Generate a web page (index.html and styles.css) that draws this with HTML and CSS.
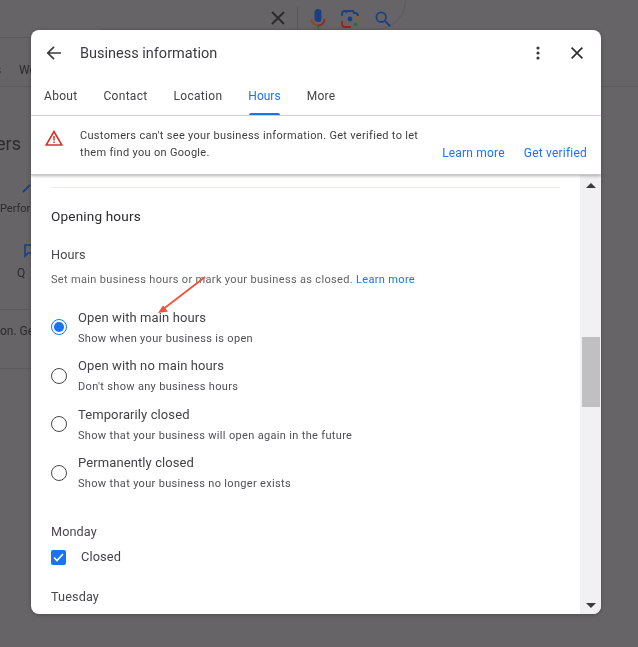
FILE: index.html
```html
<!DOCTYPE html>
<html lang="en">
<head>
<meta charset="utf-8">
<title>Business information</title>
<link rel="stylesheet" href="styles.css">
</head>
<body>
<div class="backdrop">
  <div class="search-pill"></div>
  <svg class="bg-icon bg-x" width="16" height="16" viewBox="0 0 16 16"><path d="M2 2l12 12M14 2L2 14" stroke="#2a282b" stroke-width="1.8" fill="none"/></svg>
  <div class="search-div"></div>
  <svg class="bg-icon bg-mic" width="16" height="24" viewBox="0 0 16 24"><rect x="4.5" y="1" width="7" height="13" rx="3.5" fill="#1c3f83"/><path d="M1.5 11a6.5 6.5 0 0 0 6.5 6.5" stroke="#8a4a1e" stroke-width="1.8" fill="none"/><path d="M8 17.5A6.5 6.5 0 0 0 14.500 11" stroke="#8a2a22" stroke-width="1.8" fill="none"/><path d="M8 17.500V22" stroke="#2f6b3a" stroke-width="1.8"/></svg>
  <svg class="bg-icon bg-lens" width="18" height="18" viewBox="0 0 18 18" fill="none" stroke-width="1.800"><path d="M1 6V4a3 3 0 0 1 3-3h1" stroke="#1c3f83"/><path d="M1 11v3a3 3 0 0 0 3 3h6" stroke="#8a2a22"/><path d="M5 3l1-2h6l1 2h1a3 3 0 0 1 3 3v5" stroke="#1c3f83"/><path d="M17 6v5" stroke="#8f6a16"/><circle cx="9" cy="9" r="2.400" fill="#1c3f83" stroke="none"/><circle cx="14.500" cy="14.500" r="1.800" fill="#2f6b3a" stroke="none"/></svg>
  <svg class="bg-icon bg-mag" width="16" height="16" viewBox="0 0 16 16" fill="none" stroke="#1c3f83" stroke-width="1.800"><circle cx="6.200" cy="6.200" r="4.800"/><path d="M9.800 9.800L15 15"/></svg>
  <div class="bg-line l1"></div>
  <div class="bg-line l2"></div>
  <div class="bg-line l3"></div>
  <div class="bg-line l4"></div>
  <div class="bg-line l5"></div>
  <span class="bg-text t1">s</span>
  <span class="bg-text t2">We</span>
  <span class="bg-text t3">ers</span>
  <span class="bg-text t4">Perfor</span>
  <span class="bg-text t5">Q</span>
  <span class="bg-text t6">on. Ge</span>
  <svg class="bg-icon bg-wand" width="10" height="10" viewBox="0 0 10 10"><path d="M1 9l7-7" stroke="#1c3f83" stroke-width="1.800"/></svg>
  <svg class="bg-icon bg-chat" width="10" height="14" viewBox="0 0 10 14" fill="none"><path d="M1 1h9v8H4l-3 3z" stroke="#1c3f83" stroke-width="1.600"/></svg>
</div>

<main class="dialog">
  <header class="topbar">
    <svg class="back" width="16" height="16" viewBox="0 0 16 16" fill="none" stroke="#3c3a3e" stroke-width="1.700"><path d="M15 8H2M8 1.800L1.800 8 8 14.200"/></svg>
    <h1 class="title">Business information</h1>
    <svg class="more" width="4" height="14" viewBox="0 0 4 14" fill="#3c3a3e"><circle cx="2" cy="2" r="1.600"/><circle cx="2" cy="7" r="1.600"/><circle cx="2" cy="12" r="1.600"/></svg>
    <svg class="close" width="12" height="12" viewBox="0 0 12 12" fill="none" stroke="#2f2d31" stroke-width="1.700"><path d="M.6.6l10.800 10.800M11.400.6L.6 11.400"/></svg>
  </header>
  <nav class="tabs">
    <span class="tab">About</span>
    <span class="tab">Contact</span>
    <span class="tab">Location</span>
    <span class="tab active">Hours</span>
    <span class="tab">More</span>
  </nav>
  <section class="notice">
    <svg class="warn" width="18" height="16" viewBox="0 0 18 16" fill="none"><path d="M9 1.500L1.200 15h15.600z" stroke="#d93025" stroke-width="1.600"/><path d="M9 6v4.500M9 11.500v1.600" stroke="#d93025" stroke-width="1.500"/></svg>
    <p class="notice-text">Customers can't see your business information. Get verified to let them find you on Google.</p>
    <div class="notice-links">
      <a class="link">Learn more</a>
      <a class="link">Get verified</a>
    </div>
  </section>
  <div class="body">
    <div class="content">
      <div class="rule"></div>
      <h2 class="section-title">Opening hours</h2>
      <h3 class="label">Hours</h3>
      <p class="help">Set main business hours or mark your business as closed. <a class="link inline">Learn more</a></p>
      <div class="options">
        <div class="option">
          <span class="radio on"></span>
          <div><div class="opt-title">Open with main hours</div><div class="opt-sub">Show when your business is open</div></div>
        </div>
        <div class="option">
          <span class="radio"></span>
          <div><div class="opt-title">Open with no main hours</div><div class="opt-sub">Don't show any business hours</div></div>
        </div>
        <div class="option">
          <span class="radio"></span>
          <div><div class="opt-title">Temporarily closed</div><div class="opt-sub">Show that your business will open again in the future</div></div>
        </div>
        <div class="option">
          <span class="radio"></span>
          <div><div class="opt-title">Permanently closed</div><div class="opt-sub">Show that your business no longer exists</div></div>
        </div>
      </div>
      <h3 class="label day">Monday</h3>
      <div class="check-row">
        <span class="checkbox"><svg width="11" height="9" viewBox="0 0 11 9" fill="none" stroke="#fff" stroke-width="1.600"><path d="M1 4.500l3 3L10 1"/></svg></span>
        <span class="check-label">Closed</span>
      </div>
      <h3 class="label day2">Tuesday</h3>
    </div>
    <div class="scrollbar">
      <span class="arrow up"></span>
      <span class="thumb"></span>
      <span class="arrow down"></span>
    </div>
    <svg class="annot" width="52" height="40" viewBox="0 0 52 40" fill="none"><path d="M48 2L5 35" stroke="#f4513b" stroke-width="1.800"/><path d="M1 38l10-1.500-5-6z" fill="#f4513b"/></svg>
  </div>
</main>
</body>
</html>
```
FILE: styles.css
```css
* { box-sizing: border-box; }
html, body { height: 100%; }
body {
  margin: 0;
  width: 638px;
  height: 647px;
  overflow: hidden;
  position: relative;
  background: #666467;
  font-family: Roboto, "Liberation Sans", sans-serif;
  color: #3c3a3e;
  padding: 30px 37px 33px 31px;
}
h1, h2, h3, p { margin: 0; font-weight: 400; }

.backdrop { position: absolute; inset: 0; filter: blur(.4px); }
.search-pill { position: absolute; left: 100px; top: -30px; width: 306px; height: 60px; border: 1px solid #5e5c5f; border-left: 0; border-radius: 0 30px 30px 0; }
.search-div { position: absolute; left: 297px; top: 7px; width: 1px; height: 23px; background: #5a585b; }
.bg-icon { position: absolute; }
.bg-x { left: 270px; top: 10px; }
.bg-mic { left: 310px; top: 8px; }
.bg-lens { left: 341px; top: 10px; }
.bg-mag { left: 375px; top: 11px; }
.bg-wand { left: 22px; top: 183px; }
.bg-chat { left: 24px; top: 244px; }
.bg-line { position: absolute; height: 1px; background: #5c5a5d; }
.l1 { left: 0; top: 37px; width: 31px; }
.l2 { left: 0; top: 86px; width: 31px; }
.l3 { left: 601px; top: 86px; width: 37px; }
.l4 { left: 0; top: 309px; width: 31px; }
.l5 { left: 0; top: 368px; width: 31px; }
.bg-text { position: absolute; color: #2c2a2d; font-size: 12px; line-height: 14px; white-space: nowrap; }
.t1 { left: -5px; top: 63px; }
.t2 { left: 19px; top: 63px; }
.t3 { left: -4px; top: 134px; font-size: 18px; line-height: 20px; }
.t4 { left: 0; top: 202px; font-size: 11px; }
.t5 { left: 17px; top: 266px; }
.t6 { left: 0; top: 324px; }

.dialog {
  position: relative;
  width: 570px;
  height: 584px;
  background: #fff;
  border-radius: 8px;
  overflow: hidden;
  display: flex;
  flex-direction: column;
  box-shadow: 0 1px 4px rgba(0,0,0,.25);
  filter: blur(.3px);
}

.topbar { display: flex; align-items: center; height: 46px; flex: none; padding: 0 18px 0 15px; }
.back { flex: none; }
.title { margin-left: 18px; font-size: 14.500px; line-height: 20px; color: #3c3a3e; flex: 1; padding-top: 2px; }
.more { margin-right: 31px; }

.tabs { display: flex; gap: 26px; padding: 0 13px; height: 40px; flex: none; border-bottom: 1px solid #dcdbdd; }
.tab { font-size: 12px; line-height: 40px; height: 39px; color: #444246; letter-spacing: .3px; position: relative; font-weight: 400; }
.tab.active { color: #1a73f0; letter-spacing: 0; }
.tab.active::after { content: ""; position: absolute; left: 1px; right: 1px; bottom: 0; height: 2px; background: #1a73f0; border-radius: 2px 2px 0 0; }

.notice { position: relative; flex: none; height: 59px; padding: 14px 14px 0 14px; display: flex; align-items: flex-start; box-shadow: 0 1px 3px rgba(0,0,0,.3); z-index: 1; background: #fff; border-bottom: 1px solid #c8c7c9; }
.warn { flex: none; }
.notice-text { position: absolute; left: 49px; top: 12px; width: 350px; font-size: 11px; line-height: 16.500px; letter-spacing: .31px; color: #3f3d41; }
.notice-links { margin-left: auto; display: flex; gap: 19px; padding-top: 15px; }
.link { color: #1a73f0; font-size: 12px; line-height: 16px; letter-spacing: .2px; }

.body { position: relative; flex: 1; min-height: 0; display: flex; overflow: hidden; }
.content { flex: 1; min-width: 0; padding: 12px 20px 0 20px; overflow: hidden; }
.rule { height: 1px; background: #ebe9f0; }

.section-title { margin-top: 19px; font-size: 13.600px; line-height: 18px; font-weight: 400; color: #2a282c; letter-spacing: .15px; }
.label { font-size: 12.700px; line-height: 18px; color: #4a484c; letter-spacing: .1px; }
.section-title + .label { margin-top: 21px; }
.help { margin-top: 8px; font-size: 11px; line-height: 16px; color: #636165; letter-spacing: .33px; white-space: nowrap; }
.link.inline { font-size: 11px; letter-spacing: .33px; }

.options { margin-top: 19px; display: flex; flex-direction: column; gap: 8.670px; }
.option { display: flex; align-items: center; gap: 11px; height: 40px; }
.radio { flex: none; width: 16px; height: 16px; border: 1.800px solid #4a484c; border-radius: 50%; position: relative; }
.radio.on { border-color: #1a73f0; }
.radio.on::after { content: ""; position: absolute; inset: 2.200px; background: #1a73f0; border-radius: 50%; }
.opt-title { font-size: 13px; line-height: 19px; color: #444246; letter-spacing: .1px; }
.opt-sub { font-size: 11px; line-height: 16px; margin-top: 4px; color: #504e52; letter-spacing: .33px; }

.label.day { margin-top: 30.500px; }
.check-row { margin-top: 7px; display: flex; align-items: center; height: 18px; }
.checkbox { flex: none; width: 15px; height: 15px; border-radius: 2px; background: #1a73f0; display: flex; align-items: center; justify-content: center; }
.check-label { margin-left: 15px; font-size: 12.800px; line-height: 18px; color: #444246; letter-spacing: .1px; }
.label.day2 { margin-top: 22px; }

.scrollbar { flex: none; width: 21px; background: #f1f0f2; position: relative; display: flex; flex-direction: column; align-items: center; }
.arrow { position: absolute; left: 5.500px; width: 0; height: 0; border-left: 5px solid transparent; border-right: 5px solid transparent; }
.arrow.up { top: 8px; border-bottom: 5px solid #3c3a3e; }
.arrow.down { bottom: 6px; border-top: 5px solid #3c3a3e; }
.thumb { position: absolute; left: 2px; right: 1px; top: 162px; height: 70px; background: #c0bfc1; }

.annot { position: absolute; left: 126px; top: 100px; }
```
